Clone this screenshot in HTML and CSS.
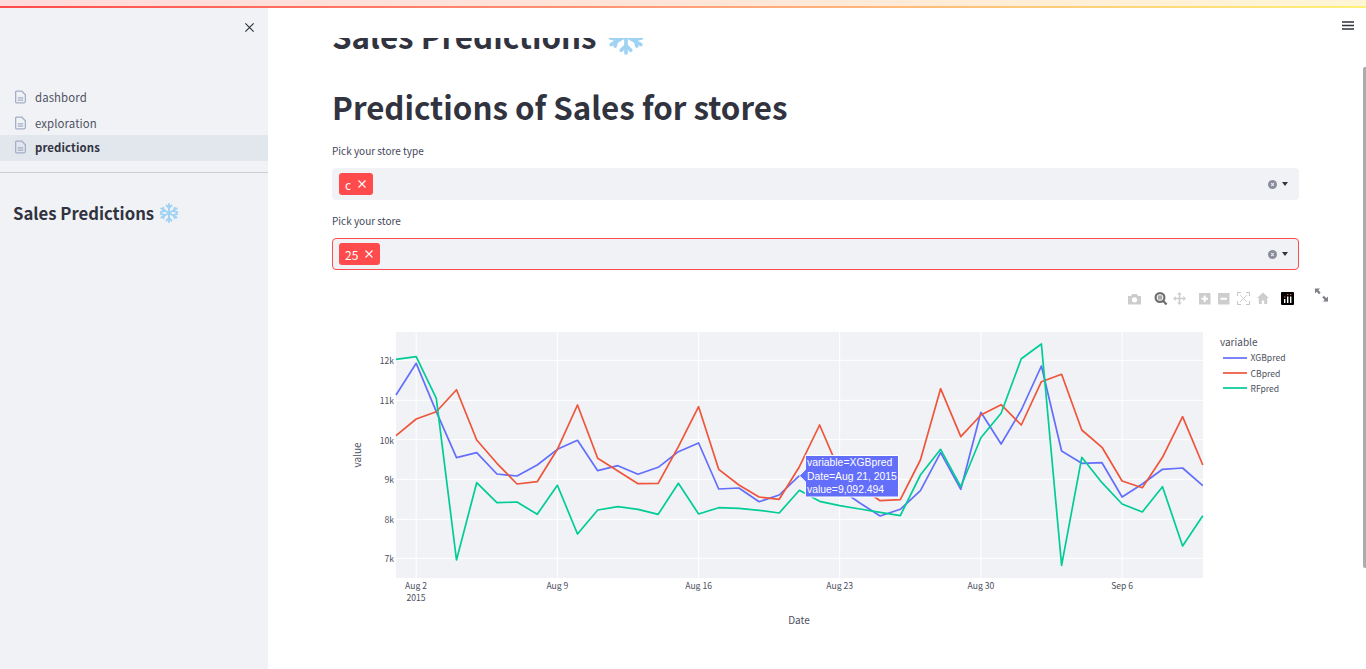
FILE: index.html
```html
<!DOCTYPE html>
<html lang="en">
<head>
  <meta charset="UTF-8"/>
  <title>Sales Predictions</title>
  <meta name="viewport" content="width=device-width, initial-scale=1.0"/>
  <link rel="stylesheet" href="styles.css">
</head>
<body>

  <div class="topline"></div>

  <div class="app">
    <aside class="sidebar">
      <div class="close-row">
        <svg class="close-x" viewBox="0 0 12 12"><path d="M1.5 1.5 10.5 10.5M10.5 1.5 1.5 10.5"/></svg>
      </div>
      <nav class="nav">
        <a class="nav-item">
          <svg class="page-icon" viewBox="0 0 12 14"><path d="M1.5.7h6l3.8 3.8v7.3a1.5 1.5 0 0 1-1.5 1.5H1.5A1 1 0 0 1 .7 12.3V1.5A1 1 0 0 1 1.5.7z"/><path d="M3 8h6M3 10.5h6"/></svg>
          <span>dashbord</span>
        </a>
        <a class="nav-item">
          <svg class="page-icon" viewBox="0 0 12 14"><path d="M1.5.7h6l3.8 3.8v7.3a1.5 1.5 0 0 1-1.5 1.5H1.5A1 1 0 0 1 .7 12.3V1.5A1 1 0 0 1 1.5.7z"/><path d="M3 8h6M3 10.5h6"/></svg>
          <span>exploration</span>
        </a>
        <a class="nav-item active">
          <svg class="page-icon" viewBox="0 0 12 14"><path d="M1.5.7h6l3.8 3.8v7.3a1.5 1.5 0 0 1-1.5 1.5H1.5A1 1 0 0 1 .7 12.3V1.5A1 1 0 0 1 1.5.7z"/><path d="M3 8h6M3 10.5h6"/></svg>
          <span>predictions</span>
        </a>
      </nav>
      <div class="side-rule"></div>
      <h2 class="side-title">Sales Predictions <svg class="flake" viewBox="0 0 20 20"><use href="#snow"/></svg></h2>
    </aside>

    <main class="main">
      <button class="menu-btn"><svg viewBox="0 0 12 10"><path d="M0 1h12M0 4.5h12M0 8h12"/></svg></button>
      <div class="scrollbar"></div>

      <div class="content">
        <div class="clipped-title">
          <h1 class="title-first">Sales Predictions <svg class="flake flake-lg" viewBox="0 0 20 20"><use href="#snow"/></svg></h1>
        </div>
        <h1 class="title">Predictions of Sales for stores</h1>

        <label class="field-label">Pick your store type</label>
        <div class="select">
          <span class="tag">c <svg viewBox="0 0 10 10"><path d="M1.5 1.5 8.5 8.5M8.5 1.5 1.5 8.5"/></svg></span>
          <span class="select-controls">
            <svg class="clear" viewBox="0 0 10 10"><circle cx="5" cy="5" r="5"/><path d="M3.6 3.6 6.4 6.4M6.4 3.6 3.6 6.4"/></svg>
            <span class="caret"></span>
          </span>
        </div>

        <label class="field-label">Pick your store</label>
        <div class="select focused">
          <span class="tag">25 <svg viewBox="0 0 10 10"><path d="M1.5 1.5 8.5 8.5M8.5 1.5 1.5 8.5"/></svg></span>
          <span class="select-controls">
            <svg class="clear" viewBox="0 0 10 10"><circle cx="5" cy="5" r="5"/><path d="M3.6 3.6 6.4 6.4M6.4 3.6 3.6 6.4"/></svg>
            <span class="caret"></span>
          </span>
        </div>

        <div class="chart">
          <svg class="plot" viewBox="332 284 1000 360" width="1000" height="360">
            <!-- toolbar -->
            <g class="tool">
              <path d="M1128 296h3l1.2-2h4.6l1.2 2h3v8.5h-13z"/>
              <circle cx="1134.5" cy="299.8" r="2.6" fill="#fff"/>
            </g>
            <g class="tool-dark">
              <circle cx="1160" cy="297.5" r="4.4" fill="none" stroke="#6f6f6f" stroke-width="2.2"/>
              <rect x="1157.8" y="295.4" width="4.4" height="4.2" fill="#a8a8a8"/>
              <path d="M1163.2 301 1166.6 304.6" stroke="#6f6f6f" stroke-width="2.2"/>
            </g>
            <g class="tool">
              <path d="M1179.5 292l2.4 2.6h-1.6v3.1h3.1v-1.6l2.6 2.4-2.6 2.4v-1.6h-3.1v3.1h1.6l-2.4 2.6-2.4-2.6h1.6v-3.1h-3.1v1.6l-2.6-2.4 2.6-2.4v1.6h3.1v-3.1h-1.6z"/>
              <path d="M1199 293h11.5v11.5h-11.5zM1218 293h11.5v11.5h-11.5z"/>
              <path d="M1204.7 295.5v6.5M1201.5 298.7h6.5M1220.5 298.7h6.5" stroke="#fff" stroke-width="2"/>
              <path d="M1237.5 296v-3.5h3.5M1246 292.5h3.5v3.5M1249.5 301v3.5H1246M1241 304.5h-3.5V301" fill="none" stroke="#c4c4c4"/>
              <path d="M1240 295l7 7M1247 295l-7 7" stroke="#d2d2d2"/>
              <path d="M1263 292.5l6 5.5h-1.8v6h-3v-3.5h-2.4v3.5h-3v-6H1257z"/>
            </g>
            <rect x="1281" y="292" width="13" height="13" rx="1" fill="#000"/>
            <path d="M1284 297h1.4M1287 294.5h1.4M1290 294.5h1.4" stroke="#ef553b" stroke-width="1.2"/>
            <path d="M1284.7 299v4M1287.7 296.5v6.5M1290.7 296.5v6.5" stroke="#fff" stroke-width="1.4"/>
            <!-- expand -->
            <path class="expand" d="M1315 288.5h5l-1.7 1.7 2.4 2.4-1.6 1.6-2.4-2.4-1.7 1.7zM1328 301.5h-5l1.7-1.7-2.4-2.4 1.6-1.6 2.4 2.4 1.7-1.7z"/>

            <rect class="plot-bg" x="396" y="332" width="807" height="246"/>
            <path class="grid" d="M396 360.3h807M396 400.3h807M396 439.6h807M396 479.3h807M396 519.3h807M396 558.3h807M416.2 332v246M557.4 332v246M698.6 332v246M839.7 332v246M980.9 332v246M1122.1 332v246"/>

            <polyline class="line blue" points="396,395 416.2,363.3 436.3,411.7 456.5,457.7 476.7,452.7 496.9,474 517,476 537.2,465 557.4,449.3 577.5,440.3 597.7,470.7 617.9,465.7 638,474.3 658.2,467.3 678.4,451.7 698.6,443 718.7,489 738.9,488 759.1,501.7 779.2,495 799.4,475.7 819.6,484 839.7,489 859.9,503 880.1,516 900.3,509.3 920.4,490.7 940.6,452.7 960.8,489.3 980.9,412.3 1001.1,444 1021.3,410 1041.4,366 1061.6,451 1081.8,463.3 1102,462.7 1122.1,497 1142.3,484 1162.5,469.3 1182.6,468 1202.8,485.7"/>
            <polyline class="line red" points="396,435.7 416.2,419 436.3,411.7 456.5,389.7 476.7,440 496.9,463.3 517,484 537.2,481.7 557.4,449.3 577.5,405 597.7,458.3 617.9,471 638,483.7 658.2,483.3 678.4,446.7 698.6,406.7 718.7,469.3 738.9,485 759.1,497 779.2,499.3 799.4,466.7 819.6,425 839.7,471.7 859.9,486.7 880.1,500.7 900.3,499.7 920.4,460 940.6,388.7 960.8,436.7 980.9,415 1001.1,404.7 1021.3,425 1041.4,381.7 1061.6,374.3 1081.8,430 1102,447.3 1122.1,481 1142.3,487.7 1162.5,457.3 1182.6,416.7 1202.8,465"/>
            <polyline class="line green" points="396,359.3 416.2,356.7 436.3,398.3 456.5,560 476.7,482.7 496.9,502.7 517,502 537.2,514.3 557.4,485.3 577.5,534 597.7,510 617.9,506.7 638,509.3 658.2,514.3 678.4,483.3 698.6,514 718.7,507.7 738.9,508.3 759.1,510.3 779.2,513 799.4,490.3 819.6,501.3 839.7,505.7 859.9,509 880.1,512.3 900.3,515.7 920.4,475 940.6,449.3 960.8,486.7 980.9,437.7 1001.1,413.3 1021.3,358.7 1041.4,344 1061.6,565.3 1081.8,457.3 1102,482.7 1122.1,504 1142.3,512 1162.5,486.7 1182.6,546 1202.8,515.7"/>

            <g class="tick" text-anchor="end">
              <text x="394" y="364">12k</text>
              <text x="394" y="404">11k</text>
              <text x="394" y="443.5">10k</text>
              <text x="394" y="483">9k</text>
              <text x="394" y="523">8k</text>
              <text x="394" y="562">7k</text>
            </g>
            <g class="tick" text-anchor="middle">
              <text x="416" y="589">Aug 2</text>
              <text x="416" y="601">2015</text>
              <text x="557.4" y="589">Aug 9</text>
              <text x="698.6" y="589">Aug 16</text>
              <text x="839.7" y="589">Aug 23</text>
              <text x="980.9" y="589">Aug 30</text>
              <text x="1122.1" y="589">Sep 6</text>
            </g>
            <text class="axis-title" x="799" y="624" text-anchor="middle">Date</text>
            <text class="axis-title" transform="translate(361 455) rotate(-90)" text-anchor="middle">value</text>

            <text class="legend-title" x="1220" y="345.5">variable</text>
            <path class="legend-line blue" d="M1223 358h24"/>
            <path class="legend-line red" d="M1223 373h24"/>
            <path class="legend-line green" d="M1223 388h24"/>
            <g class="legend-text">
              <text x="1250.5" y="361">XGBpred</text>
              <text x="1250.5" y="377">CBpred</text>
              <text x="1250.5" y="392">RFpred</text>
            </g>

            <!-- hover label -->
            <path class="hover-box" d="M799.4 475.7 805.4 469.7V455.5H898.5V497H805.4V481.7z"/>
            <g class="hover-text">
              <text x="807" y="466">variable=XGBpred</text>
              <text x="807" y="479.5">Date=Aug 21, 2015</text>
              <text x="807" y="493">value=9,092.494</text>
            </g>
          </svg>
        </div>
      </div>
    </main>
  </div>

  <svg class="defs" width="0" height="0">
    <symbol id="snow" viewBox="0 0 20 20">
      <g fill="none" stroke="#9fd2f3" stroke-width="1.9" stroke-linecap="round">
        <path d="M10 1v18M2.2 5.5l15.6 9M17.8 5.5l-15.6 9"/>
        <path d="M7.5 2.5 10 5l2.5-2.5M7.5 17.5 10 15l2.5 2.5M1.8 9l3.4-.9-.9-3.4M18.2 11l-3.4.9.9 3.4M18.2 9l-3.4-.9.9-3.4M1.8 11l3.4.9-.9 3.4"/>
      </g>
    </symbol>
  </svg>

</body>
</html>
```

FILE: styles.css
```css
* {
  box-sizing: border-box;
}
html, body {
  height: 100%;
  margin: 0;
  overflow: hidden;
}
body {
  font-family: "Noto Sans CJK SC", "Source Sans Pro", "Noto Sans", sans-serif;
  color: #31333f;
  background: #fff;
}
.defs {
  display: block;
  height: 0;
}

.topline {
  height: 8px;
  border-bottom: 2px solid;
  border-image: linear-gradient(90deg, #ff4b4b, #ffa07a 50%, #fff17a) 1;
  background: linear-gradient(90deg, #ffdbdb, #ffe6d8 50%, #fff6d6);
}
.app {
  display: flex;
  height: calc(100% - 8px);
}

/* sidebar */
.sidebar {
  width: 268px;
  flex: none;
  background: #f0f2f6;
}
.close-row {
  display: flex;
  justify-content: flex-end;
  padding: 14px 13px 0 0;
  height: 76px;
}
.close-x {
  width: 11px;
  height: 11px;
  fill: none;
  stroke: #31333f;
  stroke-width: 1.3;
}
.nav-item {
  display: flex;
  align-items: center;
  gap: 9px;
  height: 26px;
  padding-left: 15px;
  font-size: 11.4px;
  letter-spacing: 0.1px;
  color: #4f5262;
}
.nav-item.active {
  margin-top: -1px;
  padding-bottom: 2px;
  background: #e2e6ed;
  color: #31333f;
  font-weight: 600;
}
.page-icon {
  width: 11px;
  height: 14px;
  flex: none;
  fill: none;
  stroke: #a3aec8;
  stroke-width: 1.4;
}
.side-rule {
  height: 1px;
  margin-top: 11px;
  background: #cccdd1;
}
.side-title {
  margin: 28px 0 0 13px;
  font-size: 16.7px;
  font-weight: 600;
  line-height: 24px;
  color: #31333f;
  display: flex;
  align-items: center;
  gap: 5px;
}
.flake {
  width: 20px;
  height: 20px;
  flex: none;
}

/* main */
.main {
  flex: 1;
  position: relative;
  min-width: 0;
}
.menu-btn {
  position: absolute;
  top: 13px;
  right: 12px;
  width: 12px;
  height: 10px;
  padding: 0;
  border: 0;
  background: none;
}
.menu-btn svg {
  display: block;
  stroke: #31333f;
  stroke-width: 1.3;
}
.scrollbar {
  position: absolute;
  top: 59px;
  right: 0;
  width: 3px;
  height: 501px;
  background: #acacb0;
  border-radius: 2px 0 0 2px;
}
.content {
  width: 967px;
  margin-left: 64px;
}
/* the page is scrolled: only the bottom of this heading shows under the header */
.clipped-title {
  height: 19px;
  margin-top: 30px;
  overflow: hidden;
}
.title-first {
  margin: -22px 0 0;
  display: flex;
  align-items: center;
  gap: 10px;
  font-size: 31.3px;
  font-weight: 700;
  line-height: 40px;
  white-space: nowrap;
}
.flake-lg {
  width: 38px;
  height: 38px;
}
.title {
  margin: 29px 0 0;
  font-size: 31.3px;
  font-weight: 700;
  line-height: 42px;
}
.field-label {
  display: block;
  margin-top: 15px;
  font-size: 10px;
  line-height: 16px;
  color: #44475a;
}
.select + .field-label {
  margin-top: 13px;
}
.select {
  display: flex;
  align-items: center;
  height: 32px;
  margin-top: 9px;
  padding: 0 6px;
  background: #f0f2f6;
  border: 1px solid #f0f2f6;
  border-radius: 4px;
}
.select.focused {
  border-color: #ff4b4b;
}
.tag {
  display: flex;
  align-items: center;
  gap: 6px;
  height: 22px;
  padding: 0 6px;
  border-radius: 3px;
  background: #ff4b4b;
  color: #fff;
  font-size: 12px;
}
.tag svg {
  width: 10px;
  height: 10px;
  fill: none;
  stroke: #fff;
  stroke-width: 1.2;
}
.select-controls {
  display: flex;
  align-items: center;
  gap: 5px;
  margin-left: auto;
  padding-right: 4px;
}
.clear {
  width: 9px;
  height: 9px;
}
.clear circle {
  fill: #8b8d9c;
}
.clear path {
  stroke: #f0f2f6;
  stroke-width: 1.2;
}
.caret {
  width: 0;
  height: 0;
  border: 3px solid transparent;
  border-top: 4px solid #31333f;
  border-bottom: 0;
}

/* chart */
.chart {
  margin-top: 14px;
  height: 360px;
}
.plot {
  display: block;
  font-family: "Noto Sans CJK SC", "Source Sans Pro", "Noto Sans", sans-serif;
}
.tool {
  fill: #cdcdcd;
}
.expand {
  fill: #7f7f85;
}
.plot-bg {
  fill: #f0f2f6;
}
.grid {
  fill: none;
  stroke: #fff;
  stroke-width: 1;
}
.line, .legend-line {
  fill: none;
  stroke-width: 1.7;
  stroke-linejoin: round;
}
.line.blue, .legend-line.blue {
  stroke: #636efa;
}
.line.red, .legend-line.red {
  stroke: #ef553b;
}
.line.green, .legend-line.green {
  stroke: #00cc96;
}
.tick {
  font-size: 8.6px;
  fill: #4c5061;
}
.axis-title {
  font-size: 10px;
  fill: #4c5061;
}
.legend-title {
  font-size: 10px;
  fill: #4c5061;
}
.legend-text {
  font-size: 8.6px;
  fill: #4c5061;
}
.hover-box {
  fill: #636efa;
  stroke: #fff;
  stroke-width: 1;
}
.hover-text {
  font-family: "Liberation Sans", Arial, sans-serif;
  font-size: 10.4px;
  fill: #fff;
}
```
